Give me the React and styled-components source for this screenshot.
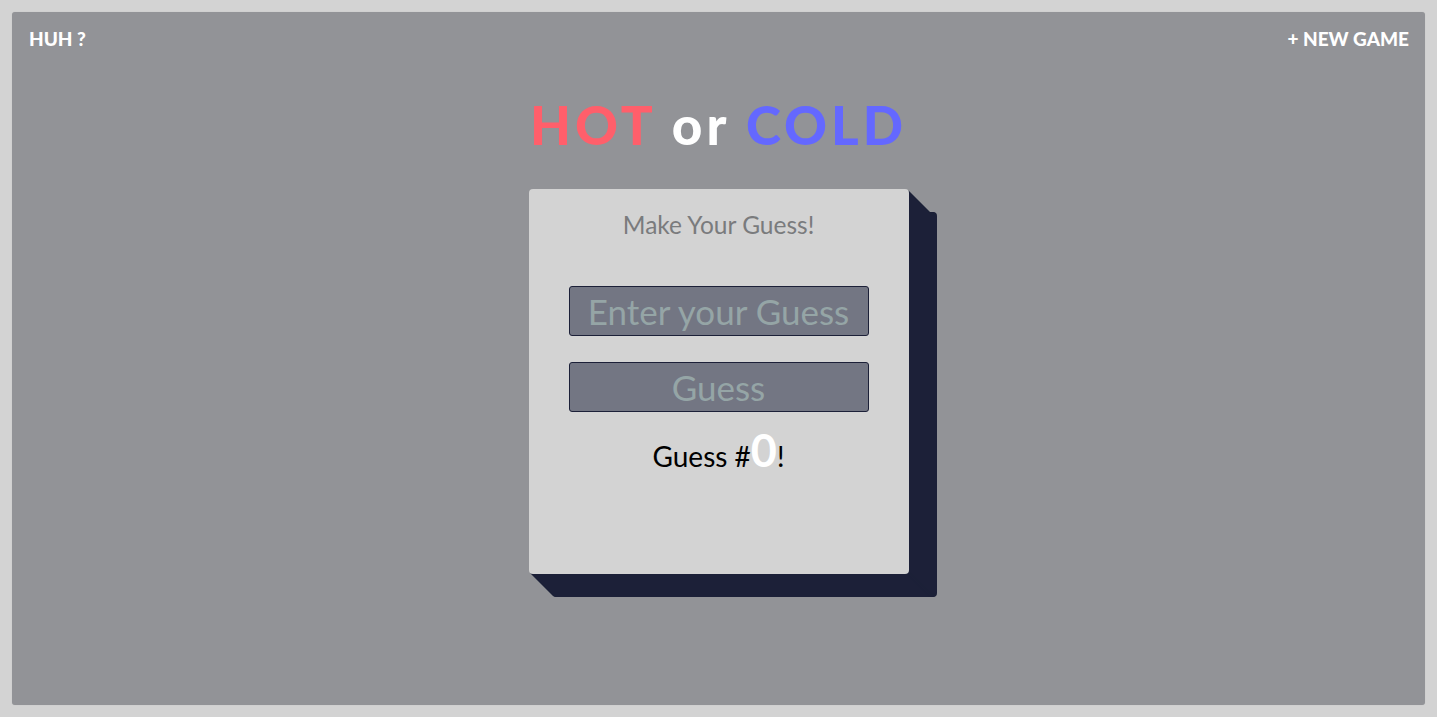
import React from "react"
import styled, { createGlobalStyle } from "styled-components"

const GlobalStyle = createGlobalStyle`
  html, body {
    margin: 0;
    background: #d3d3d3;
    font-family: Lato, "Open Sans", sans-serif;
  }
  * { box-sizing: border-box; }
`

const extrude = Array.from({ length: 28 }, (_, i) => {
  const x = i + 1
  const y = Math.min(x, 23)
  return `${x}px ${y}px 0 #1c2038`
}).join(", ")

const Page = styled.div`
  height: 100vh;
  padding: 12px;
`

const Panel = styled.div`
  height: 100%;
  background: #929397;
  border-radius: 3px;
  box-shadow: 0 0 1px rgba(0, 0, 0, 0.15);
  display: flex;
  flex-direction: column;
  align-items: center;
`

const Nav = styled.nav`
  width: 100%;
  display: flex;
  justify-content: space-between;
  padding: 15px 16px 0 17px;
`

const NavLink = styled.a`
  color: #fff;
  font-weight: 900;
  font-size: 19px;
  text-decoration: none;
  cursor: pointer;
`

const Title = styled.h1`
  margin: 48px 0 0;
  font-size: 53px;
  font-weight: 900;
  letter-spacing: 4px;
  line-height: 1;
  color: #fff;
`

const Word = styled.span`
  color: ${({ $tone }) => $tone};
`

const Card = styled.section`
  margin-top: 38px;
  width: 380px;
  height: 385px;
  background: #d3d3d3;
  border-radius: 4px;
  box-shadow: ${extrude};
  display: flex;
  flex-direction: column;
  align-items: center;
  padding-top: 22px;
`

const Prompt = styled.h2`
  margin: 0;
  font-size: 24.5px;
  font-weight: 400;
  color: #7a7b7d;
  line-height: 28px;
`

const Form = styled.form`
  margin-top: 47px;
  display: flex;
  flex-direction: column;
  gap: 26px;
`

const Field = styled.input`
  width: 300px;
  height: 50px;
  padding: 0;
  background: #737683;
  border: 1px solid #1c2038;
  border-radius: 3px;
  font-family: Lato, sans-serif;
  font-size: 35px;
  text-align: center;
  color: #95a5a6;
  outline: none;
  &::placeholder { color: #95a5a6; }
`

const Button = styled.button`
  width: 300px;
  height: 50px;
  padding: 0;
  background: #737683;
  border: 1px solid #1c2038;
  border-radius: 3px;
  font-family: Lato, sans-serif;
  font-size: 35px;
  line-height: 48px;
  color: #95a5a6;
  cursor: pointer;
`

const Counter = styled.p`
  margin: 18px 0 0;
  font-size: 28px;
  color: #000;
  line-height: 40px;
`

const Count = styled.span`
  color: #fff;
  font-size: 45px;
  font-weight: 700;
`

export default function App() {
  return (
    <>
      <GlobalStyle />
      <Page>
        <Panel>
          <Nav>
            <NavLink>HUH ?</NavLink>
            <NavLink>+ NEW GAME</NavLink>
          </Nav>
          <Title>
            <Word $tone="#ff5f6b">HOT</Word> or <Word $tone="#6468ff">COLD</Word>
          </Title>
          <Card>
            <Prompt>Make Your Guess!</Prompt>
            <Form onSubmit={(e) => e.preventDefault()}>
              <Field placeholder="Enter your Guess" />
              <Button type="submit">Guess</Button>
            </Form>
            <Counter>
              Guess #<Count>0</Count>!
            </Counter>
          </Card>
        </Panel>
      </Page>
    </>
  )
}
